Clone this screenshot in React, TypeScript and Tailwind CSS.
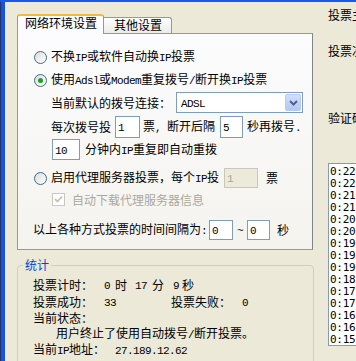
import React from 'react';

const mono = "font-['Liberation_Mono',monospace] text-[11px] tracking-[-0.6px]";

// SimSun-like mixed text: CJK at 12px, ASCII as 6px-wide mono
function T({ s, className = '' }: { s: string; className?: string }) {
  const parts = s.split(/([\x20-\x7e]+)/).filter(Boolean);
  return (
    <span className={`whitespace-pre shrink-0 ${className}`}>
      {parts.map((p, i) =>
        /^[\x20-\x7e]+$/.test(p) ? (
          <span key={i} className={mono}>{p}</span>
        ) : (
          <React.Fragment key={i}>{p}</React.Fragment>
        )
      )}
    </span>
  );
}

function Radio({ checked }: { checked?: boolean }) {
  return (
    <span className="w-[13px] h-[13px] rounded-full border border-[#3c6a94] bg-gradient-to-br from-[#dcdcd7] to-white flex items-center justify-center shrink-0">
      {checked && <span className="w-[5px] h-[5px] rounded-full bg-[#21a121]" />}
    </span>
  );
}

function Box({ v, className = '', disabled }: { v: string; className?: string; disabled?: boolean }) {
  return (
    <span
      className={`border flex items-center pl-[2px] shrink-0 ${
        disabled ? 'border-[#c9c7ba] bg-[#ebeadb] text-[#aca899]' : 'border-[#7f9db9] bg-white'
      } ${className}`}
    >
      <T s={v} />
    </span>
  );
}

const times = [
  '0:22', '0:22', '0:21', '0:21', '0:20', '0:20', '0:19', '0:19',
  '0:19', '0:18', '0:17', '0:17', '0:16', '0:16', '0:15',
];

export default function App() {
  return (
    <div className="w-[356px] h-[361px] overflow-hidden bg-[#ece9d8] flex border-t-2 border-[#1f57dd] font-['SimSun','Noto_Sans_CJK_SC',sans-serif] text-[12px] leading-[16px] text-black">
      {/* window frame */}
      <div className="w-[5px] shrink-0 bg-[#1553e0] border-l border-[#26306b]" />

      {/* left column */}
      <div className="ml-[12px] w-[298px] shrink-0 flex flex-col">
        {/* tabs */}
        <div className="mt-[12px] flex items-start h-[20px] -mb-px relative z-10">
          <div className="w-[87px] h-[20px] border-x border-[#919b9c] border-t-2 border-t-[#f6b93c] rounded-t-[3px] bg-[#fcfcfe] pl-[7px] leading-[14px]">
            网络环境设置
          </div>
          <div className="mt-[3px] w-[68px] h-[16px] border-t border-r border-[#919b9c] rounded-tr-[3px] bg-gradient-to-b from-white to-[#ecebe6] pl-[10px] leading-[14px]">
            其他设置
          </div>
        </div>

        {/* tab page */}
        <div className="w-[296px] h-[217px] shrink-0 border border-[#919b9c] border-r-[#7d8586] bg-gradient-to-b from-[#fcfcfe] to-[#f4f3ee] flex flex-col">
          <div className="mt-[13px] h-[20px] flex items-center pl-[16px]">
            <Radio />
            <T s="不换IP或软件自动换IP投票" className="ml-[4px]" />
          </div>
          <div className="mt-[3px] h-[20px] flex items-center pl-[16px]">
            <Radio checked />
            <T s="使用Adsl或Modem重复拨号/断开换IP投票" className="ml-[4px]" />
          </div>
          <div className="mt-[2px] h-[21px] flex items-center pl-[33px]">
            <T s="当前默认的拨号连接：" />
            <div className="ml-[5px] w-[127px] h-[21px] border border-[#7f9db9] bg-white flex items-center justify-between pl-[4px] pr-px">
              <T s="ADSL" />
              <span className="w-[16px] h-[17px] rounded-[2px] border border-[#b9cbf3] bg-gradient-to-b from-[#d2defa] to-[#b3c7f5] flex items-center justify-center">
                <svg width="9" height="6" viewBox="0 0 9 6">
                  <path d="M1 1 L4.5 4.5 L8 1" stroke="#4d6185" strokeWidth="2" fill="none" />
                </svg>
              </span>
            </div>
          </div>
          <div className="mt-[3px] h-[22px] flex items-center pl-[33px]">
            <T s="每次拨号投" />
            <Box v="1" className="ml-[4px] w-[25px] h-[22px]" />
            <T s="票, 断开后隔" className="ml-[3px]" />
            <Box v="5" className="ml-[5px] w-[23px] h-[22px]" />
            <T s="秒再拨号." className="ml-[4px]" />
          </div>
          <div className="mt-px h-[21px] flex items-center pl-[34px]">
            <Box v="10" className="w-[28px] h-[21px]" />
            <T s="分钟内IP重复即自动重拨" className="ml-[5px]" />
          </div>
          <div className="mt-[8px] h-[20px] flex items-center pl-[16px]">
            <Radio />
            <T s="启用代理服务器投票，每个IP投" className="ml-[4px]" />
            <Box v="1" disabled className="ml-[5px] w-[34px] h-[20px]" />
            <T s="票" className="ml-[8px]" />
          </div>
          <div className="mt-[5px] h-[13px] flex items-center pl-[34px]">
            <span className="w-[13px] h-[13px] border border-[#cac8bb] bg-white flex items-center justify-center shrink-0">
              <svg width="9" height="9" viewBox="0 0 9 9">
                <path d="M1 4 L3.5 6.5 L8 1.5" stroke="#c4c2b4" strokeWidth="1.8" fill="none" />
              </svg>
            </span>
            <T s="自动下载代理服务器信息" className="ml-[7px] text-[#aca899]" />
          </div>
          <div className="mt-[14px] h-[20px] flex items-center pl-[15px]">
            <T s="以上各种方式投票的时间间隔为:" />
            <Box v="0" className="ml-[2px] w-[24px] h-[20px]" />
            <T s="~" className="ml-[4px]" />
            <Box v="0" className="ml-[4px] w-[23px] h-[20px]" />
            <T s="秒" className="ml-[7px]" />
          </div>
        </div>

        {/* statistics group */}
        <fieldset className="mt-[7px] w-[297px] h-[130px] shrink-0 border border-[#d0d0bf] rounded-[4px]">
          <legend className="ml-[5px] px-[2px] text-[#0046d5] leading-[16px]">统计</legend>
          <div className="pl-[15px] flex flex-col">
            <div className="mt-[4px] h-[16px] flex items-center">
              <T s="投票计时：" className="w-[71px]" />
              <T s="0" />
              <T s="时" className="ml-[5px]" />
              <T s="17" className="ml-[8px]" />
              <T s="分" className="ml-[5px]" />
              <T s="9" className="ml-[9px]" />
              <T s="秒" className="ml-[3px]" />
            </div>
            <div className="h-[17px] flex items-center">
              <T s="投票成功：" className="w-[71px]" />
              <T s="33" />
              <T s="投票失败：" className="ml-[55px]" />
              <T s="0" className="ml-[11px]" />
            </div>
            <div className="h-[16px] flex items-center">
              <T s="当前状态：" />
            </div>
            <div className="h-[15px] flex items-center pl-[23px]">
              <T s="用户终止了使用自动拨号/断开投票。" />
            </div>
            <div className="h-[17px] flex items-center">
              <T s="当前IP地址：" className="w-[82px]" />
              <T s="27.189.12.62" />
            </div>
          </div>
        </fieldset>
      </div>

      {/* right column */}
      <div className="ml-[13px] w-[80px] shrink-0 flex flex-col">
        <div className="mt-[5px] h-[16px] whitespace-nowrap">投票主题：</div>
        <div className="mt-[20px] h-[16px] whitespace-nowrap">投票次数：</div>
        <div className="mt-[51px] h-[16px] whitespace-nowrap">验证码：</div>
        <div className="mt-[37px] h-[183px] shrink-0 border border-[#7f9db9] bg-white pl-px pt-[2px] font-['DejaVu_Sans_Mono',monospace] text-[11px] leading-[12px] tracking-[-0.3px]">
          {times.map((t, i) => (
            <div key={i} className="whitespace-nowrap">{t}</div>
          ))}
        </div>
      </div>
    </div>
  );
}
